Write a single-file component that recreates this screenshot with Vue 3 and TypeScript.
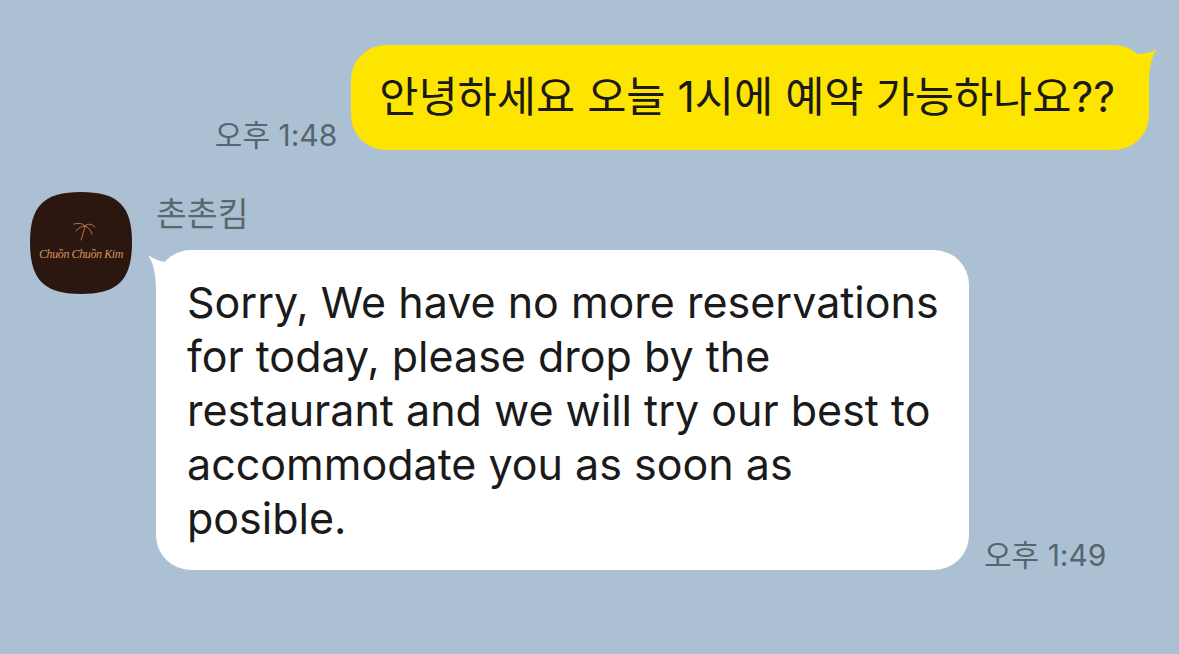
<template>
  <div class="chat">
    <!-- My message -->
    <div class="row-out">
      <span class="time">오후 1:48</span>
      <div class="bubble bubble-out">
        <svg class="tail tail-out" width="30" height="40" viewBox="0 0 30 40">
          <path d="M0 14 L10 9 C16 9 24 8 30 4 C24 12 22 24 22 40 L0 40 Z" fill="#fee500" />
        </svg>
        <span>{{ outgoing }}</span>
      </div>
    </div>

    <!-- Reply -->
    <div class="row-in">
      <div class="avatar">
        <svg class="avatar-shape" width="102" height="102" viewBox="0 0 102 102">
          <path d="M51 0 C88 0 102 14 102 50 C102 88 88 102 51 102 C14 102 0 88 0 50 C0 14 14 0 51 0 Z" fill="#2b1710" />
          <g fill="none" stroke="#c4824c" stroke-width="0.9" stroke-linecap="round">
            <path d="M51 48 C53 43 54 38 55 34" />
            <path d="M55 34 C52 31 48 31 44 32" />
            <path d="M55 34 C52 34 48 36 46 39" />
            <path d="M55 34 C58 31 62 32 65 35" />
            <path d="M55 34 C58 35 61 38 62 42" />
          </g>
        </svg>
        <span class="logo-text">Chuồn Chuồn Kim</span>
      </div>
      <div class="content">
        <div class="name">촌촌킴</div>
        <div class="message">
          <div class="bubble bubble-in">
            <svg class="tail tail-in" width="40" height="40" viewBox="0 0 40 40">
              <path d="M0 5 C6 9 13 12 19 12 C25 6 32 2 40 0 L40 40 L8 40 C8 26 6 14 0 5 Z" fill="#fff" />
            </svg>
            <span>{{ incoming }}</span>
          </div>
          <span class="time">오후 1:49</span>
        </div>
      </div>
    </div>
  </div>
</template>

<script setup lang="ts">
const outgoing = '안녕하세요 오늘 1시에 예약 가능하나요??'
const incoming =
  'Sorry, We have no more reservations for today, please drop by the restaurant and we will try our best to accommodate you as soon as posible.'
</script>

<style scoped>
.chat {
  width: 1179px;
  height: 654px;
  box-sizing: border-box;
  padding: 45px 30px 0;
  background: #abc1d3;
  font-family: Inter, "Noto Sans CJK KR", sans-serif;
  overflow: hidden;
}

.row-out {
  display: flex;
  justify-content: flex-end;
  align-items: flex-end;
  gap: 14px;
}

.row-in {
  display: flex;
  gap: 24px;
  margin-top: 42px;
}

.avatar {
  position: relative;
  flex: none;
  width: 102px;
  height: 102px;
}

.avatar-shape {
  display: block;
}

.logo-text {
  position: absolute;
  left: 0;
  right: 0;
  top: 53px;
  text-align: center;
  font-family: "Liberation Serif", serif;
  font-style: italic;
  font-size: 12px;
  letter-spacing: -0.4px;
  line-height: 18px;
  white-space: nowrap;
  color: #d3935a;
}

.name {
  height: 58px;
  font-size: 33.5px;
  line-height: 44px;
  color: #5a6670;
}

.message {
  display: flex;
  align-items: flex-end;
  gap: 15px;
}

.bubble {
  position: relative;
  color: #1a1a1a;
}

.bubble span {
  position: relative;
}

.bubble-out {
  padding: 22px 34px 24px 28px;
  height: 105px;
  box-sizing: border-box;
  background: #fee500;
  border-radius: 35px;
  font-size: 42.6px;
  line-height: 59px;
  white-space: nowrap;
}

.bubble-in {
  width: 813px;
  box-sizing: border-box;
  padding: 25px 24px 25px 31px;
  background: #fff;
  border-radius: 35px;
  font-size: 43px;
  line-height: 54px;
}

.tail {
  position: absolute;
}

.tail-out {
  top: 0;
  right: -8px;
}

.tail-in {
  top: 0;
  left: -8px;
}

.time {
  flex: none;
  font-size: 30px;
  line-height: 34px;
  color: #56656f;
}

.row-out .time {
  margin-bottom: -2px;
}

.message .time {
  margin-bottom: -2px;
}
</style>
